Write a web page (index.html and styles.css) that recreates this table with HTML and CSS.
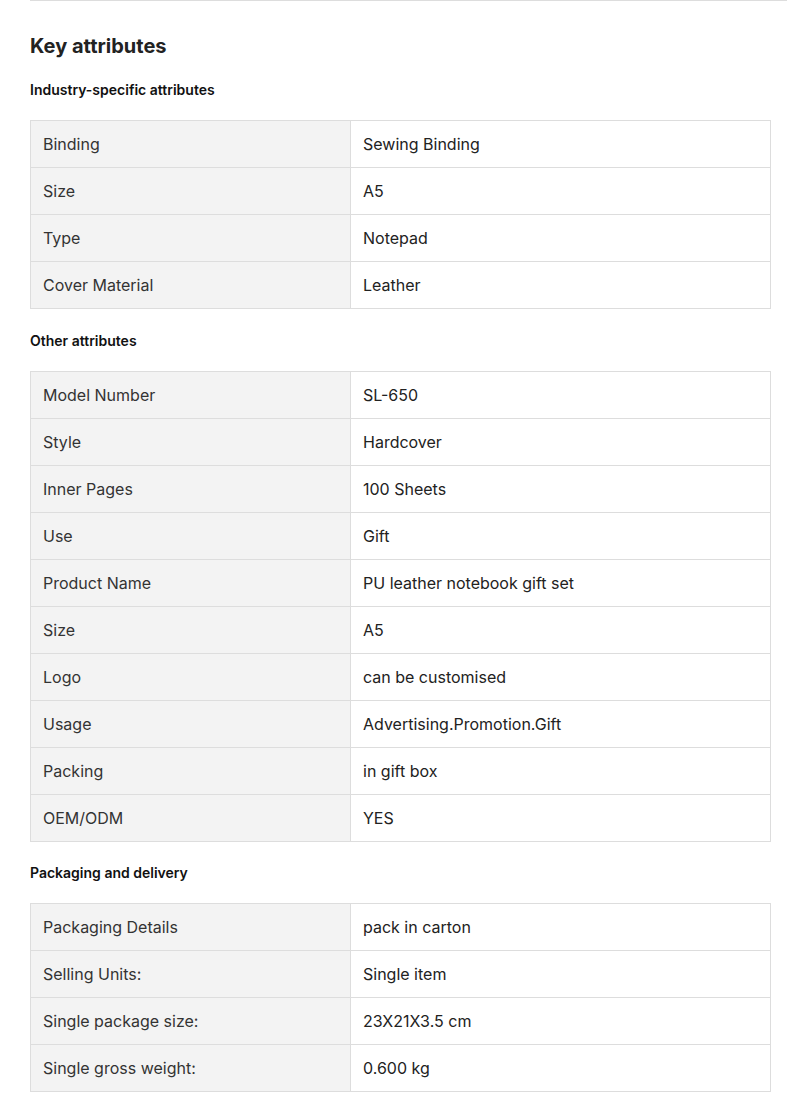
FILE: index.html
```html
<!DOCTYPE html>
<html lang="en">
<head>
    <meta charset="UTF-8">
    <meta name="viewport" content="width=device-width, initial-scale=1.0">
    <title>Key attributes</title>
    <link rel="stylesheet" href="styles.css">
</head>
<body>
    <div class="attributes">
        <h2>Key attributes</h2>

        <!-- Industry-specific -->
        <h3>Industry-specific attributes</h3>
        <table class="attr-table">
            <tr><td class="attr-name">Binding</td><td class="attr-value">Sewing Binding</td></tr>
            <tr><td class="attr-name">Size</td><td class="attr-value">A5</td></tr>
            <tr><td class="attr-name">Type</td><td class="attr-value">Notepad</td></tr>
            <tr><td class="attr-name">Cover Material</td><td class="attr-value">Leather</td></tr>
        </table>

        <!-- Other -->
        <h3>Other attributes</h3>
        <table class="attr-table">
            <tr><td class="attr-name">Model Number</td><td class="attr-value">SL-650</td></tr>
            <tr><td class="attr-name">Style</td><td class="attr-value">Hardcover</td></tr>
            <tr><td class="attr-name">Inner Pages</td><td class="attr-value">100 Sheets</td></tr>
            <tr><td class="attr-name">Use</td><td class="attr-value">Gift</td></tr>
            <tr><td class="attr-name">Product Name</td><td class="attr-value">PU leather notebook gift set</td></tr>
            <tr><td class="attr-name">Size</td><td class="attr-value">A5</td></tr>
            <tr><td class="attr-name">Logo</td><td class="attr-value">can be customised</td></tr>
            <tr><td class="attr-name">Usage</td><td class="attr-value">Advertising.Promotion.Gift</td></tr>
            <tr><td class="attr-name">Packing</td><td class="attr-value">in gift box</td></tr>
            <tr><td class="attr-name">OEM/ODM</td><td class="attr-value">YES</td></tr>
        </table>

        <!-- Packaging -->
        <h3>Packaging and delivery</h3>
        <table class="attr-table">
            <tr><td class="attr-name">Packaging Details</td><td class="attr-value">pack in carton</td></tr>
            <tr><td class="attr-name">Selling Units:</td><td class="attr-value">Single item</td></tr>
            <tr><td class="attr-name">Single package size:</td><td class="attr-value">23X21X3.5 cm</td></tr>
            <tr><td class="attr-name">Single gross weight:</td><td class="attr-value">0.600 kg</td></tr>
        </table>
    </div>
</body>
</html>
```

FILE: styles.css
```css
* {
    margin: 0;
    padding: 0;
    box-sizing: border-box;
}

body {
    background: #FFFFFF;
    color: #222222;
    font-family: Inter, 'Noto Sans', Arial, sans-serif;
}

.attributes {
    margin-left: 30px;
    padding-top: 31px;
    border-top: 1px solid #DDDDDD;
}

.attributes h2 {
    font-size: 20px;
    font-weight: 700;
    line-height: 28px;
    color: #222222;
}

.attributes h3 {
    font-size: 14px;
    font-weight: 600;
    line-height: 20px;
    color: #111111;
    margin: 21.5px 0 20px;
}

.attributes h2 + h3 {
    margin-top: 20px;
}

.attr-table {
    width: 741px;
    border-collapse: collapse;
    font-size: 16px;
}

.attr-table td {
    height: 47px;
    padding: 0 12px;
    border: 1px solid #DDDDDD;
    line-height: 22px;
    vertical-align: middle;
}

.attr-name {
    width: 320px;
    background: #F3F3F3;
    color: #333333;
}

.attr-value {
    color: #222222;
}
```
